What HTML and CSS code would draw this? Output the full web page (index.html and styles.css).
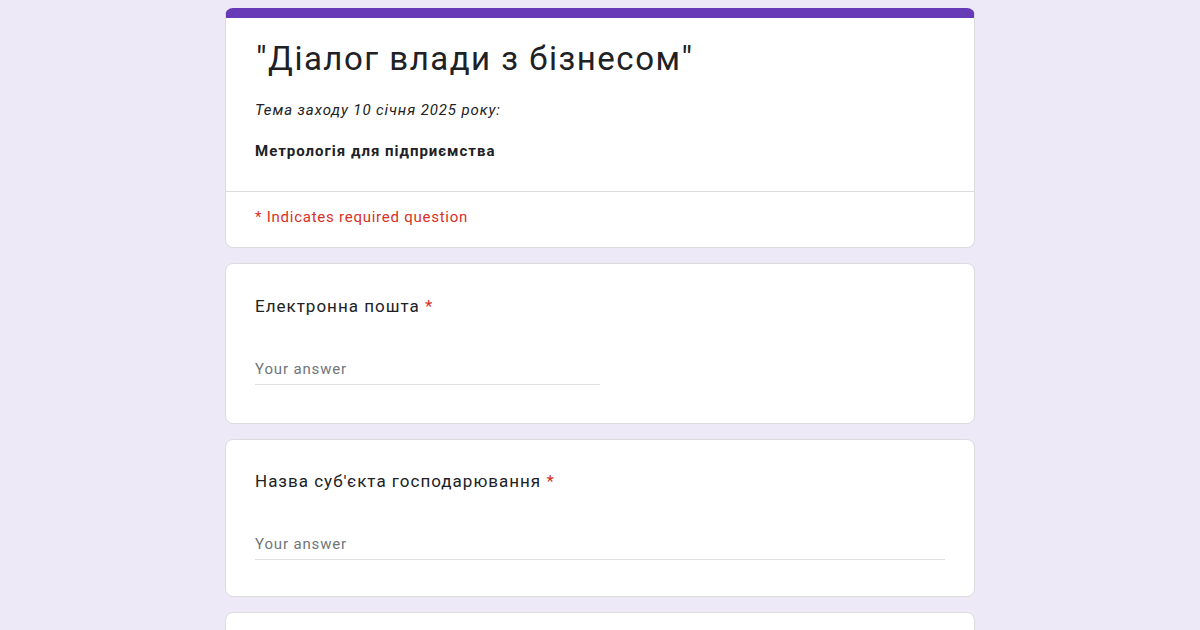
FILE: index.html
```html
<!DOCTYPE html>
<html lang="uk">
<head>
<meta charset="utf-8">
<title>Діалог влади з бізнесом</title>
<link rel="stylesheet" href="styles.css">
</head>
<body>
<div class="form">
  <div class="card header-card">
    <div class="header-main">
      <div class="title">"Діалог влади з бізнесом"</div>
      <div class="desc-italic">Тема заходу 10 січня 2025 року:</div>
      <div class="desc-bold">Метрологія для підприємства</div>
    </div>
    <div class="required-note">* Indicates required question</div>
  </div>

  <div class="card question">
    <div class="q-label">Електронна пошта <span class="star">*</span></div>
    <div class="answer short">Your answer</div>
  </div>

  <div class="card question q-tight">
    <div class="q-label">Назва суб'єкта господарювання <span class="star">*</span></div>
    <div class="answer">Your answer</div>
  </div>

  <div class="card question"></div>
</div>
</body>
</html>
```

FILE: styles.css
```css
html, body {
  margin: 0;
  padding: 0;
}
body {
  background: #ede9f7;
  font-family: Roboto, "Liberation Sans", Arial, sans-serif;
  color: #202124;
  height: 630px;
  overflow: hidden;
}
.form {
  width: 750px;
  margin: 8px auto 0;
  display: flex;
  flex-direction: column;
  gap: 15px;
}
.card {
  background: #fff;
  border: 1px solid #dadce0;
  border-radius: 8px;
  box-sizing: border-box;
}
.header-card {
  border-top: 10px solid #673ab7;
}
.header-main {
  padding: 21px 29px 30px;
  border-bottom: 1px solid #dadce0;
}
.title {
  font-size: 33px;
  line-height: 40px;
  color: #202124;
  margin-left: 1px;
  letter-spacing: 1.5px;
}
.desc-italic {
  font-size: 15px;
  line-height: 20px;
  font-style: italic;
  margin-top: 21px;
  letter-spacing: 0.9px;
}
.desc-bold {
  font-size: 15px;
  line-height: 20px;
  font-weight: 700;
  margin-top: 21px;
  letter-spacing: 1px;
}
.required-note {
  color: #d93025;
  font-size: 15px;
  line-height: 20px;
  padding: 15px 29px 20px;
  letter-spacing: 0.75px;
}
.question {
  padding: 30px 29px 38px;
  min-height: 160px;
}
.q-tight {
  padding-top: 29px;
  padding-bottom: 36px;
  min-height: 158px;
}
.q-label {
  font-size: 17px;
  line-height: 24px;
  letter-spacing: 1px;
}
.star {
  color: #d93025;
}
.answer {
  margin-top: 41px;
  font-size: 15px;
  line-height: 20px;
  color: #70757a;
  padding-bottom: 5px;
  border-bottom: 1px solid #e0e0e0;
  letter-spacing: 0.85px;
}
.short {
  width: 345px;
}
```
